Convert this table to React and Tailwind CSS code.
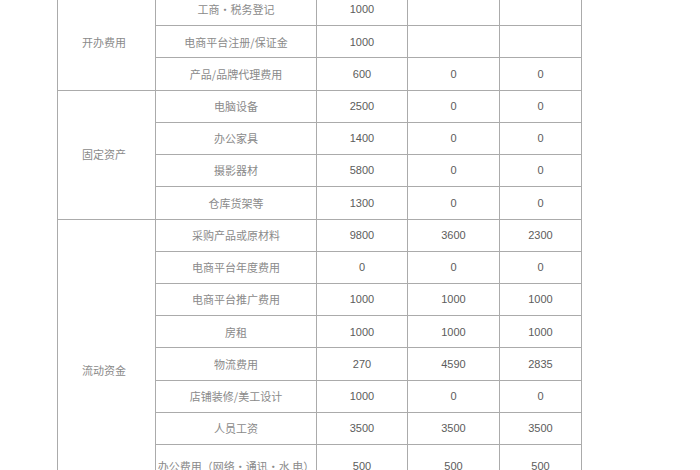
const rows = [
  ["工商・税务登记", "1000", "", ""],
  ["电商平台注册/保证金", "1000", "", ""],
  ["产品/品牌代理费用", "600", "0", "0"],
  ["电脑设备", "2500", "0", "0"],
  ["办公家具", "1400", "0", "0"],
  ["摄影器材", "5800", "0", "0"],
  ["仓库货架等", "1300", "0", "0"],
  ["采购产品或原材料", "9800", "3600", "2300"],
  ["电商平台年度费用", "0", "0", "0"],
  ["电商平台推广费用", "1000", "1000", "1000"],
  ["房租", "1000", "1000", "1000"],
  ["物流费用", "270", "4590", "2835"],
  ["店铺装修/美工设计", "1000", "0", "0"],
  ["人员工资", "3500", "3500", "3500"],
  ["办公费用（网络・通讯・水 电）", "500", "500", "500"],
  ["", "", "", ""],
];

const groups = [
  { name: "开办费用", span: "row-span-3", start: "row-start-1" },
  { name: "固定资产", span: "row-span-4", start: "row-start-4" },
  { name: "流动资金", span: "row-span-9", start: "row-start-8" },
];

const cn = "[font-family:'Noto_Sans_CJK_SC',sans-serif]";
const num = "[font-family:'Liberation_Sans',Arial,sans-serif]";
const cell =
  "border-r border-b border-[#ababab] flex items-center justify-center overflow-visible whitespace-nowrap";

export default function App() {
  return (
    <div className="w-[700px] h-[470px] bg-white overflow-hidden">
      <div className="ml-[57px] -mt-[7px] w-[525px] border-l border-t border-[#ababab] grid grid-cols-[98px_161px_91px_92px_82px] grid-rows-[repeat(14,32.23px)_44px_33px]">
        {groups.map((g) => (
          <div
            key={g.name}
            className={`${cell} col-start-1 ${g.start} ${g.span} pr-[5px] text-[11px] text-[#8a8a8a] ${cn}`}
          >
            {g.name}
          </div>
        ))}
        {rows.map((r, i) => (
          <Row key={i} r={r} />
        ))}
      </div>
    </div>
  );
}

function Row({ r }) {
  return (
    <>
      <div className={`${cell} col-start-2 text-[11px] text-[#8a8a8a] ${cn}`}>
        {r[0]}
      </div>
      <div className={`${cell} col-start-3 text-[11px] text-[#5c5c5c] ${num}`}>
        {r[1]}
      </div>
      <div className={`${cell} col-start-4 text-[11px] text-[#5c5c5c] ${num}`}>
        {r[2]}
      </div>
      <div className={`${cell} col-start-5 text-[11px] text-[#5c5c5c] ${num}`}>
        {r[3]}
      </div>
    </>
  );
}
